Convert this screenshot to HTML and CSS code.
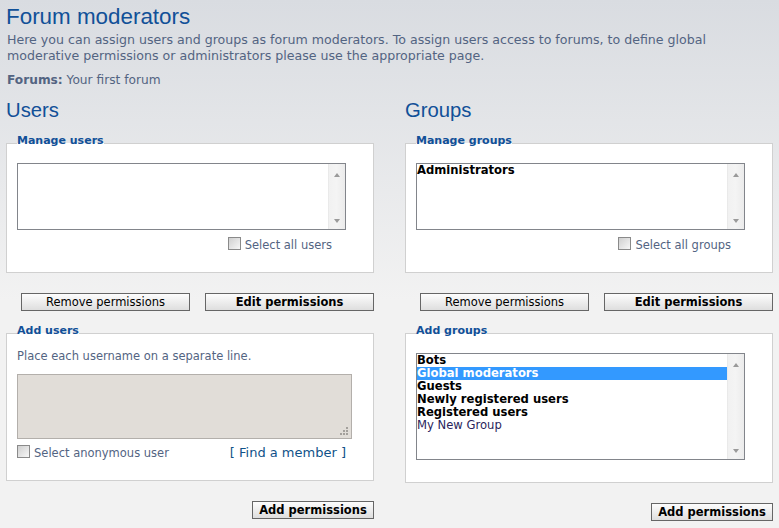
FILE: index.html
```html
<!DOCTYPE html>
<html>
<head>
<meta charset="utf-8">
<title>Forum moderators</title>
<link rel="stylesheet" href="styles.css">
</head>
<body>
<h1 class="title">Forum moderators</h1>
<p class="intro">Here you can assign users and groups as forum moderators. To assign users access to forums, to define global moderative permissions or administrators please use the appropriate page.</p>
<p class="forums"><strong>Forums:</strong> Your first forum</p>

<div class="cols">
  <div class="col">
    <h2 class="heading">Users</h2>
    <fieldset class="box box-manage">
      <legend>Manage users</legend>
      <div class="listbox lb-short">
        <div class="items"></div>
        <div class="sb"><span class="arrow up"></span><span class="arrow down"></span></div>
      </div>
      <div class="selall"><label class="chk"><span class="cb"></span>Select all users</label></div>
    </fieldset>
    <div class="btnrow">
      <button class="btn">Remove permissions</button>
      <button class="btn btn-b">Edit permissions</button>
    </div>
    <fieldset class="box box-addusers">
      <legend>Add users</legend>
      <p class="hint">Place each username on a separate line.</p>
      <div class="ta">
        <svg class="grip" width="10" height="10" viewBox="0 0 10 10">
          <g fill="#a3a09c">
            <rect x="7" y="1" width="2" height="2"/>
            <rect x="4" y="4" width="2" height="2"/><rect x="7" y="4" width="2" height="2"/>
            <rect x="1" y="7" width="2" height="2"/><rect x="4" y="7" width="2" height="2"/><rect x="7" y="7" width="2" height="2"/>
          </g>
        </svg>
      </div>
      <div class="anonrow">
        <label class="chk"><span class="cb"></span>Select anonymous user</label>
        <a class="find" href="#">[ Find a member ]</a>
      </div>
    </fieldset>
    <div class="subrow"><button class="btn btn-b btn-sub">Add permissions</button></div>
  </div>

  <div class="col">
    <h2 class="heading">Groups</h2>
    <fieldset class="box box-manage">
      <legend>Manage groups</legend>
      <div class="listbox lb-short">
        <div class="items"><div class="opt">Administrators</div></div>
        <div class="sb"><span class="arrow up"></span><span class="arrow down"></span></div>
      </div>
      <div class="selall"><label class="chk"><span class="cb"></span>Select all groups</label></div>
    </fieldset>
    <div class="btnrow">
      <button class="btn">Remove permissions</button>
      <button class="btn btn-b">Edit permissions</button>
    </div>
    <fieldset class="box box-addgroups">
      <legend>Add groups</legend>
      <div class="listbox lb-tall">
        <div class="items">
          <div class="opt">Bots</div>
          <div class="opt sel">Global moderators</div>
          <div class="opt">Guests</div>
          <div class="opt">Newly registered users</div>
          <div class="opt">Registered users</div>
          <div class="opt plain">My New Group</div>
        </div>
        <div class="sb"><span class="arrow up"></span><span class="arrow down"></span></div>
      </div>
    </fieldset>
    <div class="subrow subrow-r"><button class="btn btn-b btn-sub">Add permissions</button></div>
  </div>
</div>
</body>
</html>
```
FILE: styles.css
```css
html, body {
  margin: 0;
  height: 100%;
}
body {
  padding: 4px 6px 0 6px;
  box-sizing: border-box;
  background: linear-gradient(#d9dce1 0, #f2f2f2 300px, #f2f2f2 100%);
  font-family: "DejaVu Sans", Verdana, sans-serif;
  font-size: 11.5px;
  line-height: 16px;
  color: #536482;
}
.title {
  margin: 0;
  font-family: "Liberation Sans", Arial, sans-serif;
  font-weight: normal;
  font-size: 22.4px;
  line-height: 26px;
  color: #115098;
}
.intro {
  margin: 2px 0 0 1px;
  max-width: 750px;
  font-size: 12.6px;
}
.forums {
  margin: 8px 0 0 1px;
  font-size: 12.2px;
}
.forums strong {
  font-weight: bold;
}
.cols {
  display: flex;
  gap: 31px;
}
.col {
  width: 368px;
  display: flex;
  flex-direction: column;
}
.heading {
  margin: 10px 0 0;
  font-family: "Liberation Sans", Arial, sans-serif;
  font-weight: normal;
  font-size: 20.3px;
  line-height: 24px;
  color: #115098;
}
.box {
  margin: 11px 0 0;
  padding: 10px 10px 19px 10px;
  border: 1px solid #d0d0d0;
  background: #fff;
  min-width: 0;
}
.box legend {
  padding: 0 0 4px 0;
  font-weight: bold;
  font-size: 11px;
  line-height: 16px;
  color: #115098;
}
.listbox {
  display: flex;
  width: 329px;
  box-sizing: border-box;
  border: 1px solid #82858b;
  background: #fff;
}
.lb-short { height: 67px; }
.lb-tall { height: 107px; }
.items {
  flex: 1;
  min-width: 0;
}
.opt {
  height: 13px;
  line-height: 13px;
  font-weight: bold;
  font-size: 11.6px;
  color: #000;
  white-space: nowrap;
}
.opt.sel {
  background: #3399ff;
  color: #fff;
}
.opt.plain {
  font-weight: normal;
  color: #2a1f5c;
}
.sb {
  width: 17px;
  display: flex;
  flex-direction: column;
  justify-content: space-between;
  align-items: center;
  padding: 9px 0 6px;
  box-sizing: border-box;
  background: linear-gradient(to right, #e2e2e2 0, #f1f1f1 1px, #f4f4f4 50%, #ebebeb 100%);
}
.arrow {
  width: 0;
  height: 0;
  border-left: 3.5px solid transparent;
  border-right: 3.5px solid transparent;
}
.arrow.up { border-bottom: 4px solid #9a9a9a; }
.arrow.down { border-top: 4px solid #9a9a9a; }
.selall {
  width: 329px;
  margin-top: 7px;
  padding-right: 14px;
  box-sizing: border-box;
  text-align: right;
}
.chk {
  color: #536482;
}
.cb {
  display: inline-block;
  width: 13px;
  height: 13px;
  box-sizing: border-box;
  margin-right: 4px;
  border: 1px solid #8a8a8a;
  background: linear-gradient(135deg, #cfcfcf, #f7f7f7);
  vertical-align: -1px;
}
.btnrow {
  display: flex;
  justify-content: flex-end;
  gap: 15px;
  margin-top: 20px;
}
.btn {
  width: 169px;
  height: 18px;
  padding: 0;
  border: 1px solid #666;
  background: linear-gradient(#fdfdfd, #dedede);
  font-family: "DejaVu Sans", Verdana, sans-serif;
  font-size: 11.5px;
  line-height: 16px;
  color: #000;
}
.btn-b {
  font-weight: bold;
}
.box-addusers {
  margin-top: 12px;
  padding-bottom: 19px;
}
.hint {
  margin: -4px 0 0;
  line-height: 14px;
}
.ta {
  position: relative;
  width: 335px;
  height: 65px;
  margin-top: 11px;
  box-sizing: border-box;
  border: 1px solid #b3afab;
  background: #e1ddd8;
}
.grip {
  position: absolute;
  right: 2px;
  bottom: 2px;
}
.anonrow {
  width: 335px;
  margin-top: 6px;
  display: flex;
  justify-content: space-between;
  align-items: baseline;
  padding-right: 6px;
  box-sizing: border-box;
}
.find {
  font-size: 13px;
  color: #105289;
  text-decoration: none;
}
.box-addgroups {
  margin-top: 12px;
  padding-bottom: 22px;
}
.subrow {
  display: flex;
  justify-content: flex-end;
  margin-top: 20px;
}
.btn-sub {
  width: 122px;
}
```
